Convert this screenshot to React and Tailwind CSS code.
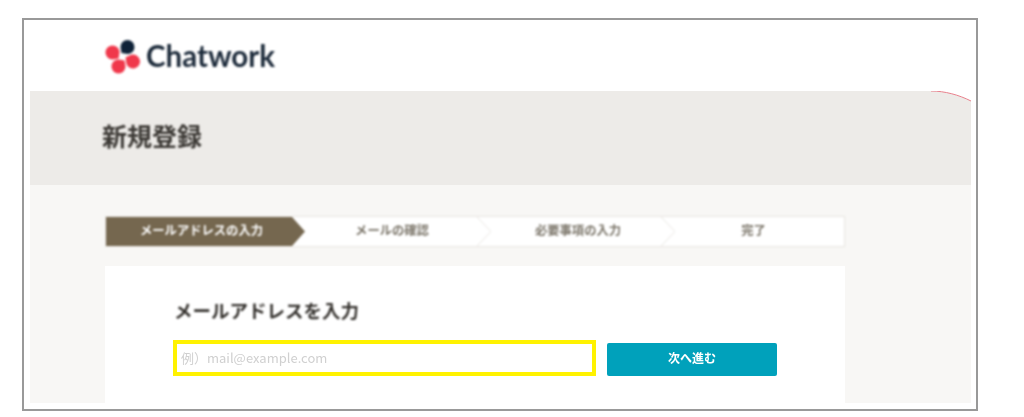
const jp = "font-['Noto_Sans_CJK_JP','Noto_Sans',sans-serif]"

const steps = [
  { label: 'メールアドレスの入力', w: 'w-[199px]', pad: 'pr-[8px]', active: true },
  { label: 'メールの確認', w: 'w-[186px]', pad: 'pr-[12px]' },
  { label: '必要事項の入力', w: 'w-[184px]', pad: 'pr-[10px]' },
  { label: '完了', w: 'flex-1', pad: 'pr-[12px]', last: true },
]

const petal = 'M0 -7A7 7 0 1 1 -7 0L-6 -6Z'

function Logo() {
  return (
    <svg width="36" height="36" viewBox="0 0 36 36" className="shrink-0">
      <path d={petal} transform="translate(22.5 9) rotate(-90)" fill="#0f2238" />
      <path d={petal} transform="translate(7.500 14.500) rotate(180)" fill="#f0384b" />
      <path d={petal} transform="translate(13.500 28.500) rotate(90)" fill="#f0384b" />
      <path d={petal} transform="translate(28 23.500) rotate(-15)" fill="#f0384b" />
    </svg>
  )
}

function Step({ step }) {
  return (
    <div className={`relative flex h-full items-center justify-center ${step.w}`}>
      {step.active && (
        <svg className="absolute inset-0 h-full w-full" viewBox="0 0 199 31" preserveAspectRatio="none">
          <path d="M0 0H186L199 15.500L186 31H0Z" fill="#75674f" />
        </svg>
      )}
      {!step.active && !step.last && (
        <svg className="absolute inset-0 h-full w-full" viewBox="0 0 186 31" preserveAspectRatio="none">
          <path d="M172 0L186 15.500L172 31" fill="none" stroke="#e8e6e1" />
        </svg>
      )}
      <span className={`relative -mt-[2px] text-[12.300px] font-bold ${step.pad} ${step.active ? 'text-white' : 'text-[#7a7468]'}`}>
        {step.label}
      </span>
    </div>
  )
}

export default function App() {
  return (
    <div className={`h-[417px] w-[1024px] overflow-hidden bg-white pl-[22px] pt-[18px] ${jp}`}>
      <div className="flex h-[393px] w-[956px] flex-col border-2 border-[#999999] pb-[6px] pl-[6px] pr-[5px]">
        <header className="flex h-[71px] items-center gap-[5px] pl-[75px] blur-[0.8px]">
          <Logo />
          <span className="font-['Lato',sans-serif] text-[29.500px] font-bold leading-none text-[#1c2a3a]">Chatwork</span>
        </header>

        <div className="relative flex h-[94px] items-center bg-[#edebe8] pb-[5px] pl-[72px]">
          <h1 className="text-[25px] font-bold text-[#3a3733] blur-[1px]">新規登録</h1>
          <svg className="absolute right-0 top-0 blur-[0.5px]" width="40" height="12" viewBox="0 0 40 12">
            <path d="M0 0C14 0 28 4 40 10V0Z" fill="#ffffff" />
            <path d="M0 0C14 0 28 4 40 10" fill="none" stroke="#e8808c" />
          </svg>
        </div>

        <main className="flex-1 bg-[#f8f7f5] pl-[75px] pr-[126px] pt-[31px]">
          <div className="flex h-[31px] border border-[#e8e6e1] bg-white blur-[0.8px]">
            {steps.map((s) => <Step key={s.label} step={s} />)}
          </div>
          <section className="mt-[19px] h-[137px] bg-white pl-[68px] pt-[29px]">
            <h2 className="pl-[1px] text-[18.500px] font-bold leading-[30px] text-[#33302c] blur-[0.8px]">メールアドレスを入力</h2>
            <div className="mt-[15px] flex items-end gap-[11px] blur-[0.6px]">
              <div className="flex h-[36px] w-[423px] items-center border-4 border-[#fff200] bg-white pl-[4px] text-[13px] text-[#d0d0d0]">
                例）mail@example.com
              </div>
              <button className="h-[33px] w-[170px] rounded-[2px] bg-[#00a1bb] pb-[3px] text-[12px] font-bold text-white">
                次へ進む
              </button>
            </div>
          </section>
        </main>
      </div>
    </div>
  )
}
